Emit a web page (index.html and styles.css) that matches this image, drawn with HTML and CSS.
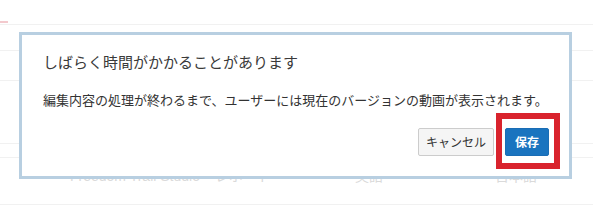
FILE: index.html
```html
<!DOCTYPE html>
<html lang="ja">
<head>
<meta charset="utf-8">
<link rel="stylesheet" href="styles.css">
</head>
<body>
<div class="page">
  <div class="row r1"><span class="pink"></span></div>
  <div class="row r2"></div>
  <div class="row r3"></div>
  <div class="row r4"></div>
  <div class="row r5"></div>
  <div class="row r6">
    <span class="ghost g1">Freedom Trail Studio</span>
    <span class="ghost g2">レポート</span>
    <span class="ghost g3">英語</span>
    <span class="ghost g4">日本語</span>
  </div>

  <div class="dialog">
    <div class="title">しばらく時間がかかることがあります</div>
    <div class="message">編集内容の処理が終わるまで、ユーザーには現在のバージョンの動画が表示されます。</div>
    <div class="actions">
      <button class="btn cancel">キャンセル</button>
      <button class="btn save">保存</button>
    </div>
  </div>
  <div class="highlight"></div>
</div>
</body>
</html>
```

FILE: styles.css
```css
html, body {
  margin: 0;
  padding: 0;
  background: #ffffff;
}
body {
  font-family: "Noto Sans CJK JP", "Noto Sans", sans-serif;
  color: #333333;
}
.page {
  position: relative;
  width: 593px;
  height: 211px;
  overflow: hidden;
}
.row {
  position: relative;
  border-bottom: 1px solid #f1f1f1;
  box-sizing: border-box;
}
.r1 { height: 25px; }
.r2 { height: 26px; }
.r3 { height: 30px; }
.r4 { height: 63px; }
.r5 { height: 14px; }
.r6 { height: 47px; }
.pink {
  position: absolute;
  left: 0;
  top: 21px;
  width: 8px;
  height: 2px;
  background: #f3c9cd;
}
.ghost {
  position: absolute;
  top: 10px;
  font-size: 14px;
  line-height: 16px;
  color: #dadada;
  font-family: "Liberation Sans", "Noto Sans CJK JP", sans-serif;
}
.g1 { left: 70px; }
.g2 { left: 215px; }
.g3 { left: 355px; }
.g4 { left: 495px; }
.dialog {
  position: absolute;
  left: 19px;
  top: 32px;
  width: 553px;
  height: 147px;
  box-sizing: border-box;
  border: 3px solid #b8cfe1;
  background: #ffffff;
  padding: 15px 20px 0 21px;
  display: flex;
  flex-direction: column;
}
.title {
  font-size: 15px;
  line-height: 23px;
  color: #3a3a3a;
  white-space: nowrap;
}
.message {
  margin-top: 17px;
  font-size: 13px;
  line-height: 20px;
  color: #333333;
  white-space: nowrap;
}
.actions {
  margin-top: 18px;
  display: flex;
  justify-content: flex-end;
  gap: 11px;
}
.btn {
  font-family: "Noto Sans CJK JP", sans-serif;
  font-size: 12px;
  height: 28px;
  box-sizing: border-box;
  border-radius: 2px;
  padding: 0;
  line-height: 26px;
}
.cancel {
  width: 76px;
  background: #f5f5f5;
  border: 1px solid #cccccc;
  color: #333333;
}
.save {
  width: 44px;
  background: #1a74bf;
  border: 1px solid #1a6db5;
  color: #ffffff;
  font-weight: bold;
}
.highlight {
  position: absolute;
  left: 496px;
  top: 113px;
  width: 64px;
  height: 56px;
  box-sizing: border-box;
  border: 6px solid #d9232d;
}
```
